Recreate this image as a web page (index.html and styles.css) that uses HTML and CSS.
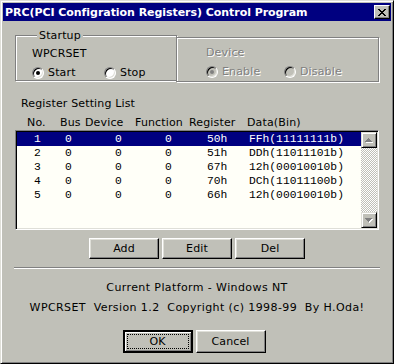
FILE: index.html
```html
<!DOCTYPE html>
<html lang="en">
<head>
    <meta charset="UTF-8">
    <title>PRC(PCI Configration Registers) Control Program</title>
    <link rel="stylesheet" href="styles.css">
</head>
<body>
<div class="window">
    <div class="titlebar">
        <span class="title">PRC(PCI Configration Registers) Control Program</span>
        <span class="close">
            <svg width="8" height="7" viewBox="0 0 8 7"><path d="M0 0h2v1h-2zM6 0h2v1h-2zM1 1h2v1h-2zM5 1h2v1h-2zM2 2h4v1h-4zM3 3h2v1h-2zM2 4h4v1h-4zM1 5h2v1h-2zM5 5h2v1h-2zM0 6h2v1h-2zM6 6h2v1h-2z" fill="#000"/></svg>
        </span>
    </div>

    <div class="content">
        <div class="groups">
            <fieldset class="group startup">
                <legend>Startup</legend>
                <div class="group-label">WPCRSET</div>
                <div class="radios">
                    <label class="radio"><span class="dot checked"></span>Start</label>
                    <label class="radio"><span class="dot"></span>Stop</label>
                </div>
            </fieldset>
            <fieldset class="group device disabled">
                <div class="group-label">Device</div>
                <div class="radios">
                    <label class="radio"><span class="dot checked"></span>Enable</label>
                    <label class="radio"><span class="dot"></span>Disable</label>
                </div>
            </fieldset>
        </div>

        <div class="list-title">Register Setting List</div>
        <div class="list-head">
            <span>No.</span><span>Bus</span><span>Device</span><span>Function</span><span>Register</span><span>Data(Bin)</span>
        </div>
        <div class="listbox">
            <div class="rows">
                <div class="row selected"><span>1</span><span>0</span><span>0</span><span>0</span><span>50h</span><span>FFh(11111111b)</span></div>
                <div class="row"><span>2</span><span>0</span><span>0</span><span>0</span><span>51h</span><span>DDh(11011101b)</span></div>
                <div class="row"><span>3</span><span>0</span><span>0</span><span>0</span><span>67h</span><span>12h(00010010b)</span></div>
                <div class="row"><span>4</span><span>0</span><span>0</span><span>0</span><span>70h</span><span>DCh(11011100b)</span></div>
                <div class="row"><span>5</span><span>0</span><span>0</span><span>0</span><span>66h</span><span>12h(00010010b)</span></div>
            </div>
            <div class="scrollbar">
                <div class="sb-btn">
                    <svg width="8" height="5" viewBox="0 0 8 5"><path d="M4 1h1v1h1v1h1v1h1v1h-7v-1h1v-1h1v-1h1z" fill="#fff"/><path d="M3 0h1v1h1v1h1v1h1v1h-7v-1h1v-1h1v-1h1z" fill="#808080"/></svg>
                </div>
                <div class="sb-track"></div>
                <div class="sb-btn">
                    <svg width="8" height="5" viewBox="0 0 8 5"><path d="M1 1h7v1h-1v1h-1v1h-1v1h-1v-1h-1v-1h-1v-1h-1z" fill="#fff"/><path d="M0 0h7v1h-1v1h-1v1h-1v1h-1v-1h-1v-1h-1v-1h-1z" fill="#808080"/></svg>
                </div>
            </div>
        </div>

        <div class="buttons">
            <button class="btn">Add</button>
            <button class="btn">Edit</button>
            <button class="btn">Del</button>
        </div>

        <div class="separator"></div>

        <p class="info">Current Platform - Windows NT</p>
        <p class="info">WPCRSET  Version 1.2  Copyright (c) 1998-99  By H.Oda!</p>

        <div class="buttons bottom">
            <button class="btn default"><span class="focus">OK</span></button>
            <button class="btn">Cancel</button>
        </div>
    </div>
</div>
</body>
</html>
```

FILE: styles.css
```css
body {
    margin: 0;
    background-color: #c0c0b8;
    font-family: "DejaVu Sans", sans-serif;
    font-size: 11px;
    letter-spacing: 0.15px;
    color: #000;
}
.window {
    width: 394px;
    height: 364px;
    box-sizing: border-box;
    padding: 2px;
    border: 1px solid;
    border-color: #dfdfd8 #000 #000 #dfdfd8;
    box-shadow: inset 1px 1px 0 #fff, inset -1px -1px 0 #808080;
    background-color: #c0c0b8;
}
.titlebar {
    height: 18px;
    display: flex;
    align-items: center;
    justify-content: space-between;
    padding: 0 1px 0 2px;
    background-color: #000080;
    color: #fff;
    font-weight: bold;
    font-size: 11px;
    letter-spacing: -0.05px;
}
.close {
    width: 16px;
    height: 14px;
    box-sizing: border-box;
    display: flex;
    align-items: center;
    justify-content: center;
    background-color: #c0c0b8;
    border: 1px solid;
    border-color: #fff #000 #000 #fff;
    box-shadow: inset -1px -1px 0 #808080;
}
.content {
    padding: 8px 12px 0 12px;
}

/* group boxes */
.groups {
    display: flex;
    align-items: flex-start;
}
.group {
    margin: 0;
    border: 1px solid #808080;
    box-shadow: inset 1px 1px 0 #fff, 1px 1px 0 #fff;
}
.group legend {
    padding: 0 2px;
    margin-left: 5px;
    line-height: 13px;
    background-color: #c0c0b8;
}
.startup {
    width: 161px;
    padding: 0 0 1px 16px;
    box-sizing: border-box;
}
.device {
    width: 204px;
    box-sizing: border-box;
    padding: 8px 0 3px 29px;
    margin-top: 8px;
    margin-left: -1px;
}
.group-label {
    line-height: 13px;
}
.startup .group-label {
    margin-top: 5px;
}
.radios {
    display: flex;
    margin-top: 6px;
}
.radio {
    display: flex;
    align-items: center;
    gap: 4px;
    width: 72px;
    line-height: 13px;
}
.device .radio {
    width: 78px;
}
.dot {
    width: 12px;
    height: 12px;
    box-sizing: border-box;
    border-radius: 50%;
    border: 1px solid;
    border-color: #808080 #fff #fff #808080;
    box-shadow: inset 1px 1px 0 #000, inset -1px -1px 0 #dfdfd8;
    background-color: #fff;
    display: flex;
    align-items: center;
    justify-content: center;
}
.dot.checked::after {
    content: "";
    width: 4px;
    height: 4px;
    border-radius: 50%;
    background-color: #000;
}
.disabled {
    color: #808080;
    text-shadow: 1px 1px 0 #fff;
}
.disabled .dot {
    background-color: #c0c0b8;
}
.disabled .dot.checked::after {
    background-color: #808080;
}

/* list */
.list-title {
    margin: 15px 0 0 6px;
    line-height: 13px;
}
.list-head {
    display: grid;
    grid-template-columns: 33px 25px 50px 54px 58px auto;
    padding-left: 12px;
    margin-top: 6px;
    line-height: 13px;
}
.listbox {
    display: flex;
    height: 100px;
    width: 364px;
    box-sizing: border-box;
    margin-top: 1px;
    padding: 1px;
    border: 1px solid;
    border-color: #808080 #fff #fff #808080;
    box-shadow: inset 1px 1px 0 #000, inset -1px -1px 0 #dfdfd8;
    background-color: #fffff8;
}
.rows {
    flex: 1;
    font-family: "Liberation Mono", monospace;
    font-size: 11.3px;
    letter-spacing: 0;
}
.row {
    display: grid;
    grid-template-columns: 31px 50px 50px 42px 42px 1fr;
    padding-left: 17px;
    height: 14px;
    line-height: 14px;
}
.row.selected {
    background-color: #000080;
    color: #fff;
}
.scrollbar {
    width: 16px;
    display: flex;
    flex-direction: column;
}
.sb-btn {
    width: 16px;
    height: 16px;
    box-sizing: border-box;
    display: flex;
    align-items: center;
    justify-content: center;
    background-color: #c0c0b8;
    border: 1px solid;
    border-color: #dfdfd8 #000 #000 #dfdfd8;
    box-shadow: inset 1px 1px 0 #fff, inset -1px -1px 0 #808080;
}
.sb-track {
    flex: 1;
    background-image: repeating-conic-gradient(#fff 0 25%, #c0c0b8 0 50%);
    background-size: 2px 2px;
}

/* buttons */
.buttons {
    display: flex;
    justify-content: center;
    gap: 3px;
    margin-top: 8px;
}
.btn {
    width: 70px;
    height: 21px;
    box-sizing: border-box;
    padding: 0;
    font-family: "DejaVu Sans", sans-serif;
    font-size: 11px;
    letter-spacing: 0.15px;
    color: #000;
    background-color: #c0c0b8;
    border: 1px solid;
    border-color: #fff #000 #000 #fff;
    box-shadow: inset -1px -1px 0 #808080, inset 1px 1px 0 #dfdfd8;
}
.bottom {
    margin-top: 12px;
    padding-right: 6px;
}
.bottom .btn {
    height: 23px;
}
.btn.default {
    border: 2px solid #000;
    box-shadow: inset 1px 1px 0 #fff, inset -1px -1px 0 #808080;
    padding: 2px;
}
.focus {
    display: block;
    height: 100%;
    box-sizing: border-box;
    border: 1px dotted #000;
    line-height: 13px;
}
.separator {
    height: 1px;
    width: 366px;
    margin: 8px 0 0 -1px;
    background-color: #808080;
    border-bottom: 1px solid #fff;
}
.info {
    margin: 0;
    text-align: center;
    white-space: pre;
    line-height: 20px;
    letter-spacing: 0.4px;
}
.separator + .info {
    margin-top: 9px;
}
```
